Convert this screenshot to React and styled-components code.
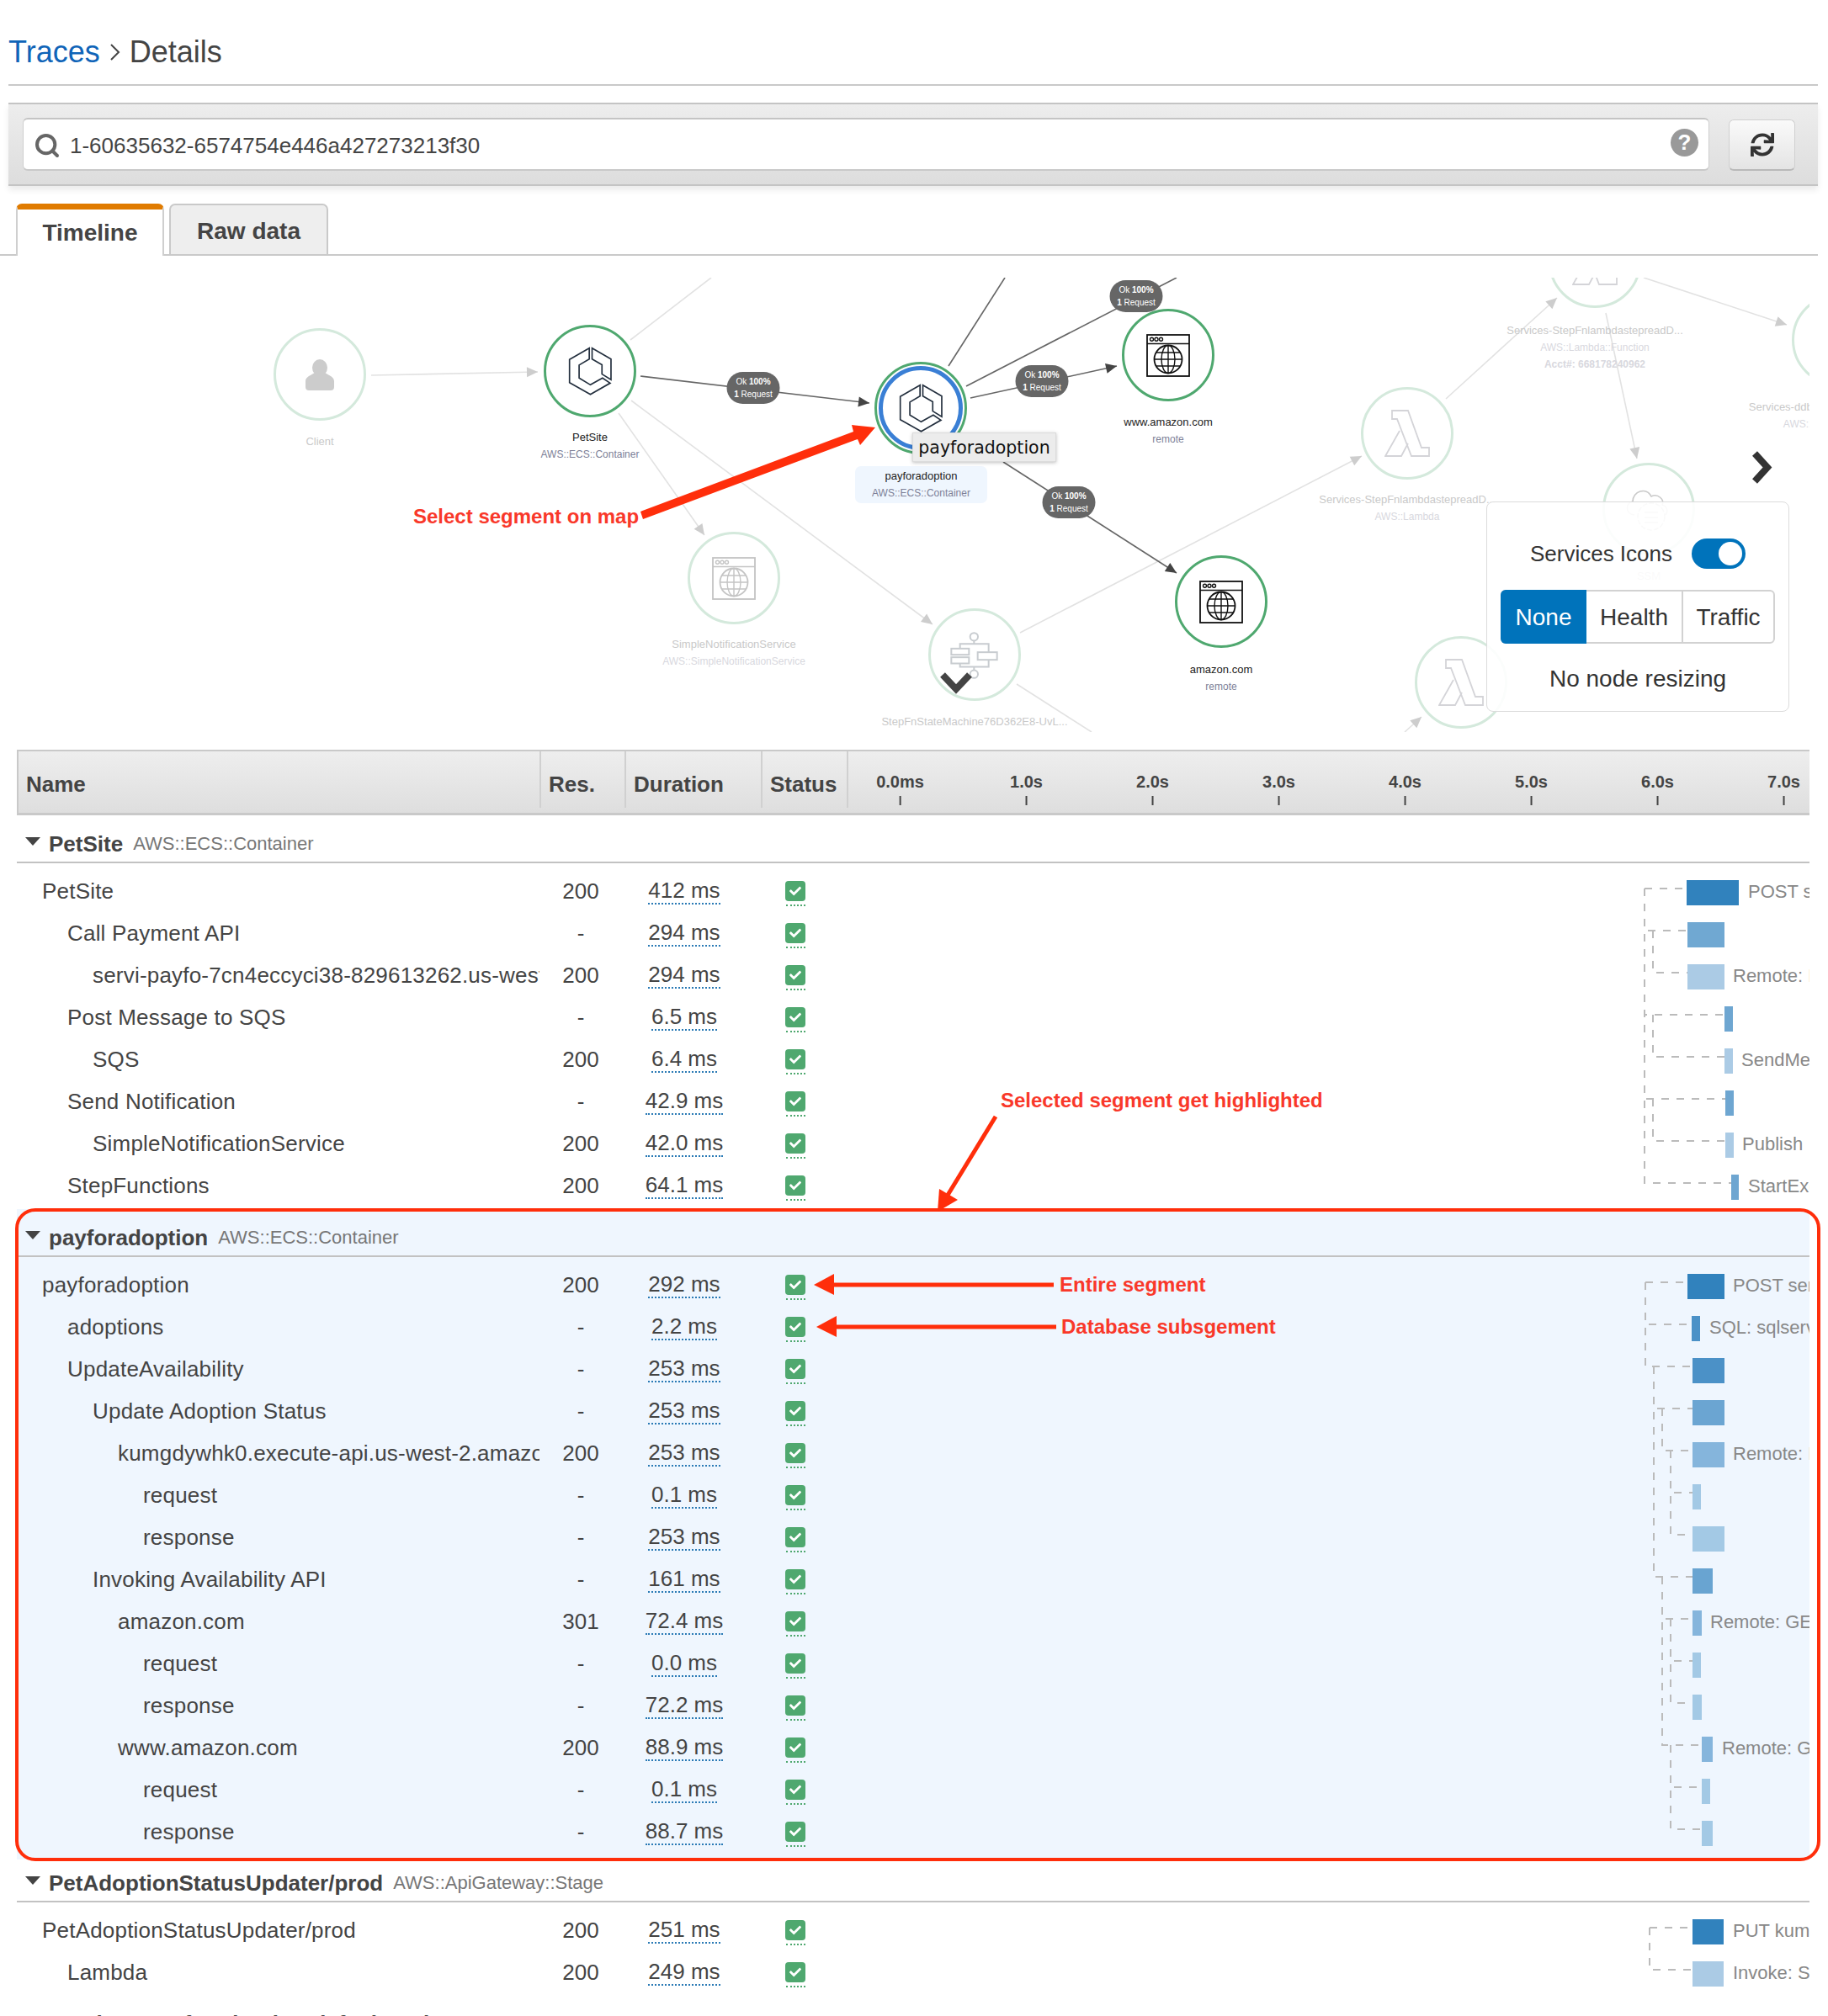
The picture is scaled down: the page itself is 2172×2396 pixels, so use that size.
import React from 'react';
import styled, { createGlobalStyle } from 'styled-components';
import { Search } from 'lucide-react';
import { FaSync, FaCheck } from 'react-icons/fa';

const GlobalStyle = createGlobalStyle`
  html, body { margin: 0; padding: 0; background: #fff; }
  body { font-family: "Liberation Sans", Arial, sans-serif; color: #444; }
`;

const Page = styled.div`
  position: relative;
  width: 2172px;
  height: 2396px;
  overflow: hidden;
`;

const Breadcrumb = styled.nav`
  display: flex;
  align-items: center;
  height: 100px;
  margin: 0 12px 0 10px;
  padding-top: 24px;
  box-sizing: border-box;
  font-size: 36px;
  color: #444;
  a { color: #0f64b8; text-decoration: none; }
  svg { margin: 0 11px 0 11px; }
`;

const Rule = styled.div`
  height: 2px;
  margin: 0 12px 0 10px;
  background: #c9c9c9;
`;

const SearchBar = styled.div`
  display: flex;
  align-items: flex-end;
  gap: 23px;
  height: 99px;
  margin: 20px 12px 0 10px;
  padding: 0 27px 16px 17px;
  box-sizing: border-box;
  background: linear-gradient(#ededed, #dddddd);
  border-top: 2px solid #c4c4c4;
  border-bottom: 2px solid #c4c4c4;
  box-shadow: 0 5px 7px rgba(0, 0, 0, 0.08);
`;

const SearchInput = styled.div`
  flex: 1;
  display: flex;
  align-items: center;
  gap: 11px;
  height: 63px;
  padding: 3px 12px 0;
  box-sizing: border-box;
  background: #fff;
  border: 1px solid #cfcfcf;
  border-top: 2px solid #c4c4c4;
  border-bottom: 2px solid #c9c9c9;
  border-radius: 6px;
  font-size: 26px;
  color: #444;
  svg { color: #666; }
`;

const HelpIcon = styled.span`
  margin: -7px 0 0 auto;
  width: 33px;
  height: 33px;
  border-radius: 50%;
  background: #999;
  color: #fff;
  font-size: 26px;
  font-weight: bold;
  line-height: 33px;
  text-align: center;
`;

const RefreshButton = styled.button`
  display: flex;
  align-items: center;
  justify-content: center;
  width: 79px;
  height: 61px;
  padding: 0;
  background: linear-gradient(#fafafa, #e4e4e4);
  border: 1px solid #d0d0d0;
  border-bottom: 2px solid #b9b9b9;
  border-radius: 6px;
  color: #333;
`;

const TabBar = styled.div`
  display: flex;
  gap: 6px;
  height: 62px;
  margin: 21px 12px 0 0;
  padding-left: 19px;
  box-sizing: border-box;
  border-bottom: 2px solid #c9c9c9;
`;

const Tab = styled.div`
  display: flex;
  align-items: center;
  justify-content: center;
  box-sizing: border-box;
  width: ${p => p.$width}px;
  height: 62px;
  padding-top: 4px;
  font-size: 28px;
  font-weight: bold;
  color: #444;
  border: 2px solid ${p => (p.$active ? '#cfcfcf' : '#c9c9c9')};
  border-radius: 7px 7px 0 0;
  background: ${p => (p.$active ? '#fff' : '#eeeeee')};
  ${p => p.$active && 'border-top: 7px solid #e07b00; border-bottom: 0; padding-top: 0;'}
`;

const MapArea = styled.div`
  height: 587px;
  padding-top: 26px;
  box-sizing: border-box;
`;

const Canvas = styled.div`
  position: relative;
  width: 2150px;
  height: 540px;
  overflow: hidden;
`;

const EdgeLayer = styled.svg`
  position: absolute;
  left: 0;
  top: 0;
`;

const Circle = styled.div`
  position: absolute;
  display: flex;
  align-items: center;
  justify-content: center;
  width: 110px;
  height: 110px;
  box-sizing: border-box;
  transform: translate(-50%, -50%);
  border-radius: 50%;
  border: 3px solid ${p => (p.$faded ? '#d4e9dc' : '#4fa86f')};
  background: #fff;
  &::after {
    content: '';
    display: ${p => (p.$selected ? 'block' : 'none')};
    position: absolute;
    inset: 2px;
    border-radius: 50%;
    border: 5px solid #3a7fd5;
  }
`;

const NodeLabel = styled.div`
  position: absolute;
  transform: translateX(-50%);
  white-space: nowrap;
  text-align: center;
  line-height: 20px;
  font-size: 12px;
  color: ${p => (p.$faded ? '#d8d8de' : '#7d7f97')};
`;

const NodeName = styled.div`
  font-size: 13px;
  color: ${p => (p.$faded ? '#c9c9c9' : '#222')};
`;

const NodeBold = styled.div`
  font-weight: bold;
`;

const SelectedLabel = styled.div`
  position: absolute;
  display: flex;
  flex-direction: column;
  align-items: center;
  justify-content: center;
  width: 157px;
  height: 44px;
  background: #eff6fe;
  border-radius: 7px;
  line-height: 20px;
  font-size: 12px;
  color: #7d7f97;
`;

const Badge = styled.div`
  position: absolute;
  display: flex;
  flex-direction: column;
  align-items: center;
  justify-content: center;
  width: 63px;
  height: 38px;
  transform: translate(-50%, -50%);
  border-radius: 19px;
  background: #666;
  color: #fff;
  font-size: 10px;
  line-height: 15px;
  white-space: nowrap;
  b { font-weight: bold; }
`;

const Tooltip = styled.div`
  position: absolute;
  left: 1084px;
  top: 184px;
  width: 171px;
  height: 35px;
  box-sizing: border-box;
  background: #ececec;
  border: 1px solid #dcdcdc;
  box-shadow: 0 1px 4px rgba(0, 0, 0, 0.25);
  font-family: "DejaVu Sans", sans-serif;
  font-size: 20.5px;
  line-height: 35px;
  text-align: center;
  color: #111;
`;

const Chevron = styled.svg`
  position: absolute;
`;

const SettingsPanel = styled.div`
  position: absolute;
  left: 1766px;
  top: 266px;
  display: flex;
  flex-direction: column;
  align-items: center;
  width: 360px;
  height: 250px;
  padding-top: 43px;
  box-sizing: border-box;
  background: rgba(255, 255, 255, 0.9);
  border: 1px solid #dcdcdc;
  border-radius: 8px;
  color: #333;
`;

const ToggleRow = styled.div`
  display: flex;
  align-items: center;
  gap: 23px;
  font-size: 26px;
`;

const Toggle = styled.div`
  position: relative;
  width: 64px;
  height: 36px;
  border-radius: 18px;
  background: #0073bb;
  &::after {
    content: '';
    position: absolute;
    right: 4px;
    top: 4px;
    width: 28px;
    height: 28px;
    border-radius: 50%;
    background: #fff;
  }
`;

const Segments = styled.div`
  display: flex;
  margin-top: 25px;
  width: 326px;
  height: 64px;
  box-sizing: border-box;
  border: 2px solid #d2d2d2;
  border-radius: 6px;
`;

const Segment = styled.div`
  display: flex;
  align-items: center;
  justify-content: center;
  flex: none;
  box-sizing: border-box;
  width: ${p => p.$width}px;
  padding-top: 2px;
  font-size: 28px;
  color: ${p => (p.$active ? '#fff' : '#333')};
  background: ${p => (p.$active ? '#0073bb' : 'transparent')};
  margin: ${p => (p.$active ? '-2px 0 -2px -2px' : '0')};
  border-radius: ${p => (p.$active ? '6px 0 0 6px' : '0')};
  border-right: ${p => (p.$divided ? '2px solid #d2d2d2' : '0')};
`;

const ResizeLabel = styled.div`
  margin-top: 26px;
  font-size: 28px;
  line-height: 32px;
`;

const Table = styled.div`
  width: 2130px;
  margin-left: 20px;
`;

const Columns = styled.div`
  display: grid;
  grid-template-columns: 621px 101px 162px 102px 1144px;
`;

const TableHeader = styled(Columns)`
  height: 78px;
  box-sizing: border-box;
  background: linear-gradient(#eeeeee, #dedede);
  border-top: 2px solid #c9c9c9;
  border-bottom: 3px solid #c9c9c9;
  border-left: 2px solid #c9c9c9;
`;

const HeaderCell = styled.div`
  display: flex;
  align-items: center;
  padding: 12px 0 0 9px;
  box-sizing: border-box;
  font-size: 26px;
  font-weight: bold;
  color: #444;
  border-right: 2px solid #d0d0d0;
  margin-bottom: 6px;
`;

const Axis = styled.div`
  position: relative;
`;

const Tick = styled.div`
  position: absolute;
  top: 24px;
  transform: translateX(-50%);
  font-size: 20px;
  font-weight: bold;
  line-height: 24px;
  color: #444;
  text-align: center;
  white-space: nowrap;
  &::after {
    content: '';
    display: block;
    width: 2px;
    height: 11px;
    margin: 5px auto 0;
    background: #444;
  }
`;

const Group = styled.section`
  position: relative;
  margin-top: ${p => p.$gap}px;
  ${p => p.$highlight && `
    background: #eff6fe;
    box-shadow: 0 8px 0 #eff6fe;
    &::after {
      content: '';
      position: absolute;
      left: -2px;
      right: -13px;
      top: -1px;
      bottom: -10px;
      border: 4.5px solid #ff2e0b;
      border-radius: 24px;
      pointer-events: none;
      z-index: 3;
    }
  `}
`;

const GroupHeader = styled.header`
  display: flex;
  align-items: center;
  height: 57px;
  padding: 20px 0 7px 10px;
  box-sizing: border-box;
  border-bottom: 2px solid #c2c2c2;
  white-space: nowrap;
`;

const Triangle = styled.span`
  width: 0;
  height: 0;
  margin: -6px 10px 0 0;
  border-left: 9px solid transparent;
  border-right: 9px solid transparent;
  border-top: 10px solid #444;
`;

const GroupTitle = styled.span`
  font-size: 26px;
  font-weight: bold;
  line-height: 28px;
  color: #444;
`;

const GroupType = styled.span`
  margin-left: 12px;
  font-size: 22px;
  line-height: 28px;
  color: #777;
`;

const Rows = styled.div`
  position: relative;
  margin-top: 8px;
`;

const ConnectorLayer = styled.svg`
  position: absolute;
  left: 0;
  top: 0;
`;

const RowGrid = styled(Columns)`
  height: 50px;
  font-size: 26px;
  color: #444;
`;

const NameCell = styled.div`
  align-self: center;
  padding-left: ${p => 30 + p.$depth * 30}px;
  overflow: hidden;
  white-space: nowrap;
  letter-spacing: 0.2px;
`;

const ResCell = styled.div`
  align-self: center;
  text-align: center;
  padding-right: 3px;
`;

const DurationCell = styled.div`
  display: flex;
  align-items: center;
  justify-content: center;
  padding-right: 20px;
`;

const DurationValue = styled.span`
  line-height: 30px;
  border-bottom: 2px dotted #2a7ab5;
`;

const StatusCell = styled.div`
  display: flex;
  align-items: center;
  padding-left: 29px;
`;

const StatusBadge = styled.span`
  position: relative;
  display: flex;
  align-items: center;
  justify-content: center;
  width: 24px;
  height: 24px;
  border-radius: 4px;
  background: #4fa86f;
  color: #fff;
  &::after {
    content: '';
    position: absolute;
    left: 1px;
    right: 0;
    top: 28px;
    border-bottom: 2px dotted #4fa86f;
  }
`;

const BarCell = styled.div`
  position: relative;
  overflow: hidden;
`;

const Bar = styled.div`
  position: absolute;
  top: 12px;
  height: 30px;
  background: ${p => p.$color};
`;

const BarLabel = styled.span`
  position: absolute;
  top: 11px;
  font-size: 22px;
  line-height: 30px;
  color: #888;
  white-space: nowrap;
`;

const Annotations = styled.svg`
  position: absolute;
  left: 0;
  top: 0;
  z-index: 5;
  pointer-events: none;
`;

const Note = styled.div`
  position: absolute;
  z-index: 6;
  transform: translateY(-50%);
  font-size: 24px;
  font-weight: bold;
  color: #f9382a;
  white-space: nowrap;
`;

// map drawings

const EcsIcon = ({ size = 55 }) => (
  <svg width={size} height={size * 1.1} viewBox="320 108 164 180" fill="none" stroke="#232f3e" strokeWidth="5" strokeLinejoin="miter">
    <path d="M398 116 L328 156 V238 L402 280 L472 240 L445 222 L402 246 L362 222 V176 L398 155 Z" />
    <path d="M408 116 L475 155 V228 L443 208 V175 L408 155 Z" />
  </svg>
);

const WebIcon = ({ color }) => (
  <svg width="52" height="51" viewBox="0 0 52 51" fill="none" stroke={color} strokeWidth="1.4">
    <rect x="1" y="1" width="50" height="49" strokeWidth="1.8" />
    <path d="M1 11.5H51" />
    <circle cx="6.5" cy="6.2" r="2" />
    <circle cx="12" cy="6.2" r="2" />
    <circle cx="17.5" cy="6.2" r="2" />
    <circle cx="26" cy="30" r="16.5" strokeWidth="1.8" />
    <ellipse cx="26" cy="30" rx="8" ry="16.5" />
    <path d="M26 13.5V46.5M9.5 30H42.5M12 22H40M12 38H40" />
  </svg>
);

const LambdaIcon = () => (
  <svg width="55" height="57" viewBox="0 0 55 57" fill="none" stroke="#d4d4d8" strokeWidth="1.8">
    <path d="M9 1H28L44 45H53V55H32L15 11H9Z" />
    <path d="M18 25L1 55H20L28 40" />
  </svg>
);

const StepIcon = () => (
  <svg width="60" height="57" viewBox="115 90 180 170" fill="none" stroke="#c8ccd0" strokeWidth="6">
    <circle cx="203" cy="110" r="14" />
    <circle cx="203" cy="243" r="14" />
    <rect x="122" y="152" width="63" height="22" />
    <rect x="122" y="183" width="63" height="22" />
    <rect x="216" y="165" width="69" height="27" />
    <path d="M203 124V135M153 152V135H255V165M255 192V217H153V205M203 217V229" />
  </svg>
);

const PersonIcon = () => (
  <svg width="34" height="37" viewBox="0 0 34 37" fill="#cccccc">
    <ellipse cx="17" cy="10" rx="9" ry="10" />
    <path d="M0 33V26C0 21 6 19 11 16H23C28 19 34 21 34 26V33C34 36 32 37 30 37H4C2 37 0 36 0 33Z" />
  </svg>
);

const CloudIcon = () => (
  <svg width="62" height="62" viewBox="0 0 62 62" fill="none" stroke="#c9c9c9" strokeWidth="1.6">
    <path d="M14 38C4 38 2 24 12 22C12 10 28 4 34 16C42 12 50 20 47 26C54 28 54 36 50 38" />
    <circle cx="34" cy="40" r="16" strokeDasharray="6 2" />
    <path d="M26 35H42M26 41H42M26 47H42" />
  </svg>
);

// data

const nodes = [
  { x: 380, y: 445, faded: true, icon: <PersonIcon />, labelY: 525, name: 'Client' },
  { x: 701, y: 441, icon: <EcsIcon />, labelY: 520, name: 'PetSite', sub: ['AWS::ECS::Container'] },
  { x: 872, y: 687, faded: true, icon: <WebIcon color="#c4c4c4" />, labelY: 766, name: 'SimpleNotificationService', sub: ['AWS::SimpleNotificationService'] },
  { x: 1158, y: 778, faded: true, icon: <StepIcon />, labelY: 858, name: 'StepFnStateMachine76D362E8-UvL...' },
  { x: 1388, y: 422, icon: <WebIcon color="#111" />, labelY: 502, name: 'www.amazon.com', sub: ['remote'] },
  { x: 1451, y: 715, icon: <WebIcon color="#111" />, labelY: 796, name: 'amazon.com', sub: ['remote'] },
  { x: 1672, y: 515, faded: true, icon: <LambdaIcon />, labelY: 594, name: 'Services-StepFnlambdastepreadD...', sub: ['AWS::Lambda'] },
  { x: 1895, y: 311, faded: true, icon: <LambdaIcon />, labelY: 393, name: 'Services-StepFnlambdastepreadD...', sub: ['AWS::Lambda::Function'], bold: 'Acct#: 668178240962' },
  { x: 2184, y: 404, faded: true, icon: <WebIcon color="#c4c4c4" />, labelY: 484, name: 'Services-ddbpetadoptiontable-XYZ...', sub: ['AWS::DynamoDB::Table'] },
  { x: 1959, y: 605, faded: true, icon: <CloudIcon />, labelY: 685, name: 'SSM' },
  { x: 1736, y: 811, faded: true, icon: <LambdaIcon /> },
];

const edges = [
  { from: [441, 446], to: [639, 442], arrow: true },
  { from: [749, 404], to: [845, 330] },
  { from: [735, 491], to: [837, 636], arrow: true },
  { from: [750, 476], to: [1108, 742], arrow: true },
  { from: [1212, 752], to: [1618, 542], arrow: true },
  { from: [1208, 813], to: [1297, 870] },
  { from: [1718, 474], to: [1850, 354], arrow: true },
  { from: [1953, 330], to: [2123, 386], arrow: true },
  { from: [1908, 372], to: [1945, 545], arrow: true },
  { from: [1669, 870], to: [1689, 852], arrow: true },
  { from: [761, 447], to: [1033, 479], arrow: true, dark: true },
  { from: [1127, 435], to: [1194, 330], dark: true },
  { from: [1148, 459], to: [1398, 330], dark: true },
  { from: [1153, 473], to: [1327, 435], arrow: true, dark: true },
  { from: [1192, 549], to: [1398, 681], arrow: true, dark: true },
];

const badges = [[895, 461], [1350, 352], [1238, 453], [1270, 597]];

const ticks = ['0.0ms', '1.0s', '2.0s', '3.0s', '4.0s', '5.0s', '6.0s', '7.0s'];

const DARK = '#3182bd';
const MID = '#6ea6d1';
const PALE = '#abcbe5';
const SOFT = '#a3c9e5';
const SKY = '#85b5dc';
const DEEP = '#4b91c7';

const groups = [
  {
    title: 'PetSite', type: 'AWS::ECS::Container', gap: 0, lineX: 1954,
    rows: [
      { name: 'PetSite', depth: 0, res: '200', time: '412 ms', bar: [2004, 2066, DARK], label: 'POST servi-payfo', labelX: 2077 },
      { name: 'Call Payment API', depth: 1, res: '-', time: '294 ms', bar: [2005, 2049, '#70a8d2'] },
      { name: 'servi-payfo-7cn4eccyci38-829613262.us-west-2.elb.amazonaws.com', depth: 2, res: '200', time: '294 ms', bar: [2005, 2049, PALE], label: 'Remote: POST', labelX: 2059 },
      { name: 'Post Message to SQS', depth: 1, res: '-', time: '6.5 ms', bar: [2049, 2059, MID] },
      { name: 'SQS', depth: 2, res: '200', time: '6.4 ms', bar: [2049, 2059, PALE], label: 'SendMessage', labelX: 2069 },
      { name: 'Send Notification', depth: 1, res: '-', time: '42.9 ms', bar: [2050, 2060, MID] },
      { name: 'SimpleNotificationService', depth: 2, res: '200', time: '42.0 ms', bar: [2050, 2060, PALE], label: 'Publish', labelX: 2070 },
      { name: 'StepFunctions', depth: 1, res: '200', time: '64.1 ms', bar: [2057, 2066, MID], label: 'StartExecution', labelX: 2077 },
    ],
  },
  {
    title: 'payforadoption', type: 'AWS::ECS::Container', gap: 3, highlight: true, lineX: 1955,
    rows: [
      { name: 'payforadoption', depth: 0, res: '200', time: '292 ms', bar: [2005, 2049, DARK], label: 'POST servi', labelX: 2059 },
      { name: 'adoptions', depth: 1, res: '-', time: '2.2 ms', bar: [2010, 2020, DEEP], label: 'SQL: sqlserver', labelX: 2031 },
      { name: 'UpdateAvailability', depth: 1, res: '-', time: '253 ms', bar: [2011, 2049, DEEP] },
      { name: 'Update Adoption Status', depth: 2, res: '-', time: '253 ms', bar: [2011, 2049, '#6ba5d2'] },
      { name: 'kumgdywhk0.execute-api.us-west-2.amazonaws.com', depth: 3, res: '200', time: '253 ms', bar: [2011, 2049, SKY], label: 'Remote: PUT', labelX: 2059 },
      { name: 'request', depth: 4, res: '-', time: '0.1 ms', bar: [2011, 2021, SOFT] },
      { name: 'response', depth: 4, res: '-', time: '253 ms', bar: [2011, 2049, SOFT] },
      { name: 'Invoking Availability API', depth: 2, res: '-', time: '161 ms', bar: [2011, 2035, '#69a4d1'] },
      { name: 'amazon.com', depth: 3, res: '301', time: '72.4 ms', bar: [2011, 2022, SKY], label: 'Remote: GET', labelX: 2032 },
      { name: 'request', depth: 4, res: '-', time: '0.0 ms', bar: [2011, 2021, SOFT] },
      { name: 'response', depth: 4, res: '-', time: '72.2 ms', bar: [2011, 2022, SOFT] },
      { name: 'www.amazon.com', depth: 3, res: '200', time: '88.9 ms', bar: [2022, 2035, SKY], label: 'Remote: GET', labelX: 2046 },
      { name: 'request', depth: 4, res: '-', time: '0.1 ms', bar: [2022, 2032, SOFT] },
      { name: 'response', depth: 4, res: '-', time: '88.7 ms', bar: [2022, 2035, SOFT] },
    ],
  },
  {
    title: 'PetAdoptionStatusUpdater/prod', type: 'AWS::ApiGateway::Stage', gap: 2, lineX: 1960,
    rows: [
      { name: 'PetAdoptionStatusUpdater/prod', depth: 0, res: '200', time: '251 ms', bar: [2011, 2048, DARK], label: 'PUT kumgdywhk0', labelX: 2059 },
      { name: 'Lambda', depth: 1, res: '200', time: '249 ms', bar: [2011, 2048, PALE], label: 'Invoke: Services', labelX: 2059 },
    ],
  },
  {
    title: 'Services-payforadoption-default-task', type: 'AWS::ECS::FARGATE', gap: 2, lineX: 1960,
    rows: [],
  },
];

const notes = [
  { x: 491, y: 614, text: 'Select segment on map' },
  { x: 1189, y: 1308, text: 'Selected segment get highlighted' },
  { x: 1259, y: 1527, text: 'Entire segment' },
  { x: 1261, y: 1577, text: 'Database subsgement' },
];

const Edge = ({ from, to, arrow, dark }) => {
  const angle = Math.atan2(to[1] - from[1], to[0] - from[0]);
  const point = (len, side) => [
    to[0] - len * Math.cos(angle) - side * Math.sin(angle),
    to[1] - len * Math.sin(angle) + side * Math.cos(angle),
  ].join(',');
  return (
    <g>
      <line x1={from[0]} y1={from[1]} x2={to[0]} y2={to[1]} stroke={dark ? '#666' : '#e2e2e2'} strokeWidth="1.6" />
      {arrow && <polygon points={`${to.join(',')} ${point(13, 6)} ${point(13, -6)}`} fill={dark ? '#444' : '#cdcdcd'} />}
    </g>
  );
};

const Connectors = ({ rows, lineX }) => {
  const yOf = i => i * 50 + 22;
  const paths = rows.map((row, i) => {
    const left = row.bar[0] - 20;
    if (row.depth === 0) return `M${lineX - 20} ${yOf(i)}H${left}`;
    let parent = i - 1;
    while (rows[parent].depth !== row.depth - 1) parent -= 1;
    const x = lineX - 20 + (row.depth - 1) * 10;
    return `M${x} ${yOf(parent)}V${yOf(i)}H${left}`;
  });
  return (
    <ConnectorLayer width="2130" height={rows.length * 50} fill="none" stroke="#bbb" strokeWidth="2" strokeDasharray="9 9">
      {paths.map(d => <path key={d} d={d} />)}
    </ConnectorLayer>
  );
};

const TraceRow = ({ row }) => {
  const barOrigin = 1006;
  return (
    <RowGrid>
      <NameCell $depth={row.depth}>{row.name}</NameCell>
      <ResCell>{row.res}</ResCell>
      <DurationCell><DurationValue>{row.time}</DurationValue></DurationCell>
      <StatusCell><StatusBadge><FaCheck size={14} /></StatusBadge></StatusCell>
      <BarCell>
        <Bar $color={row.bar[2]} style={{ left: row.bar[0] - barOrigin, width: row.bar[1] - row.bar[0] }} />
        {row.label && <BarLabel style={{ left: row.labelX - barOrigin }}>{row.label}</BarLabel>}
      </BarCell>
    </RowGrid>
  );
};

const ServiceMap = () => (
  <MapArea>
    <Canvas>
      <EdgeLayer width="2150" height="540" viewBox="0 330 2150 540">
        {edges.map(e => <Edge key={e.from.join()} {...e} />)}
      </EdgeLayer>
      {nodes.map(n => (
        <React.Fragment key={`${n.x}-${n.y}`}>
          <Circle $faded={n.faded} style={{ left: n.x, top: n.y - 330 }}>{n.icon}</Circle>
          {n.name && (
            <NodeLabel $faded={n.faded} style={{ left: n.x, top: n.labelY - 340 }}>
              <NodeName $faded={n.faded}>{n.name}</NodeName>
              {(n.sub || []).map(s => <div key={s}>{s}</div>)}
              {n.bold && <NodeBold>{n.bold}</NodeBold>}
            </NodeLabel>
          )}
        </React.Fragment>
      ))}
      <Circle $selected style={{ left: 1094, top: 155 }}><EcsIcon /></Circle>
      <SelectedLabel style={{ left: 1016, top: 224 }}>
        <NodeName>payforadoption</NodeName>
        <div>AWS::ECS::Container</div>
      </SelectedLabel>
      {badges.map(([x, y]) => (
        <Badge key={x} style={{ left: x, top: y - 330 }}>
          <span>Ok <b>100%</b></span>
          <span><b>1</b> Request</span>
        </Badge>
      ))}
      <Tooltip>payforadoption</Tooltip>
      <Chevron width="40" height="27" viewBox="0 0 40 27" style={{ left: 1116, top: 468 }} fill="none" stroke="#444" strokeWidth="8">
        <path d="M4 4L20 21L36 4" />
      </Chevron>
      <Chevron width="25" height="39" viewBox="0 0 25 39" style={{ left: 2081, top: 206 }} fill="none" stroke="#333" strokeWidth="8">
        <path d="M4 3L19 19.5L4 36" />
      </Chevron>
      <SettingsPanel>
        <ToggleRow>Services Icons<Toggle /></ToggleRow>
        <Segments>
          <Segment $active $width={102}>None</Segment>
          <Segment $divided $width={115}>Health</Segment>
          <Segment $width={107}>Traffic</Segment>
        </Segments>
        <ResizeLabel>No node resizing</ResizeLabel>
      </SettingsPanel>
    </Canvas>
  </MapArea>
);

const App = () => (
  <Page>
    <GlobalStyle />
    <Breadcrumb>
      <a href="#traces">Traces</a>
      <svg width="13" height="22" viewBox="0 0 13 22" fill="none" stroke="#444" strokeWidth="2"><path d="M2 2L11 11L2 20" /></svg>
      Details
    </Breadcrumb>
    <Rule />
    <SearchBar>
      <SearchInput>
        <Search size={32} strokeWidth={3} />
        1-60635632-6574754e446a427273213f30
        <HelpIcon>?</HelpIcon>
      </SearchInput>
      <RefreshButton><FaSync size={28} /></RefreshButton>
    </SearchBar>
    <TabBar>
      <Tab $active $width={176}>Timeline</Tab>
      <Tab $width={189}>Raw data</Tab>
    </TabBar>
    <ServiceMap />
    <Table>
      <TableHeader>
        <HeaderCell>Name</HeaderCell>
        <HeaderCell>Res.</HeaderCell>
        <HeaderCell>Duration</HeaderCell>
        <HeaderCell>Status</HeaderCell>
        <Axis>
          {ticks.map((t, i) => <Tick key={t} style={{ left: 61.5 + i * 150 }}>{t}</Tick>)}
        </Axis>
      </TableHeader>
      {groups.map(g => (
        <Group key={g.title} $gap={g.gap} $highlight={g.highlight}>
          <GroupHeader>
            <Triangle />
            <GroupTitle>{g.title}</GroupTitle>
            <GroupType>{g.type}</GroupType>
          </GroupHeader>
          <Rows>
            <Connectors rows={g.rows} lineX={g.lineX} />
            {g.rows.map(r => <TraceRow key={r.name + r.time} row={r} />)}
          </Rows>
        </Group>
      ))}
    </Table>
    <Annotations width="2172" height="2396">
      <g fill="#ff2e0b" stroke="none">
        <path d="M761 608 L1014 513 L1012 505 L1040 508 L1022 529 L1019 522 L764 617 Z" />
        <polygon points="1114,1440 1116,1413 1138,1426" />
        <polygon points="967,1527 991,1514 991,1539" />
        <polygon points="970,1577 994,1564 994,1589" />
      </g>
      <g stroke="#ff2e0b" strokeWidth="5">
        <line x1="1183" y1="1327" x2="1125" y2="1422" />
        <line x1="1252" y1="1527" x2="990" y2="1527" />
        <line x1="1255" y1="1577" x2="993" y2="1577" />
      </g>
    </Annotations>
    {notes.map(n => <Note key={n.text} style={{ left: n.x, top: n.y }}>{n.text}</Note>)}
  </Page>
);

export default App;
